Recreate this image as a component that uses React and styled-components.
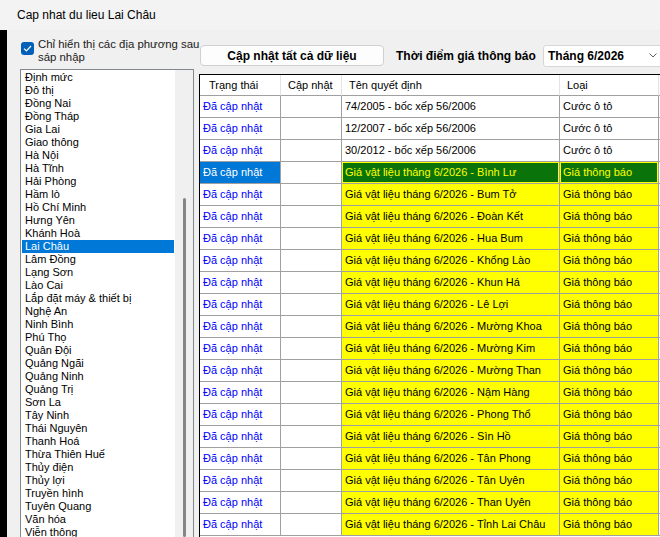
import React from "react";
import styled, { createGlobalStyle } from "styled-components";

const GlobalStyle = createGlobalStyle`
  html, body {
    margin: 0;
    padding: 0;
  }
  body {
    width: 660px;
    height: 537px;
    overflow: hidden;
    background: #f0f0f0;
    font-family: "Liberation Sans", Arial, sans-serif;
    color: #000;
  }
  * {
    box-sizing: border-box;
  }
`;

const areas = [
  "Định mức", "Đô thị", "Đồng Nai", "Đồng Tháp", "Gia Lai", "Giao thông",
  "Hà Nội", "Hà Tĩnh", "Hải Phòng", "Hầm lò", "Hồ Chí Minh", "Hưng Yên",
  "Khánh Hoà", "Lai Châu", "Lâm Đồng", "Lạng Sơn", "Lào Cai",
  "Lắp đặt máy & thiết bị", "Nghệ An", "Ninh Bình", "Phú Thọ", "Quân Đội",
  "Quảng Ngãi", "Quảng Ninh", "Quảng Trị", "Sơn La", "Tây Ninh",
  "Thái Nguyên", "Thanh Hoá", "Thừa Thiên Huế", "Thủy điện", "Thủy lợi",
  "Truyền hình", "Tuyên Quang", "Văn hóa", "Viễn thông",
];

const communes = [
  "Bình Lư", "Bum Tở", "Đoàn Kết", "Hua Bum", "Khổng Lào", "Khun Há",
  "Lê Lợi", "Mường Khoa", "Mường Kim", "Mường Than", "Nậm Hàng",
  "Phong Thổ", "Sìn Hồ", "Tân Phong", "Tân Uyên", "Than Uyên",
  "Tỉnh Lai Châu",
];

const rows = [
  { name: "74/2005 - bốc xếp 56/2006", kind: "Cước ô tô", price: false },
  { name: "12/2007 - bốc xếp 56/2006", kind: "Cước ô tô", price: false },
  { name: "30/2012 - bốc xếp 56/2006", kind: "Cước ô tô", price: false },
  ...communes.map((c) => ({
    name: `Giá vật liệu tháng 6/2026 - ${c}`,
    kind: "Giá thông báo",
    price: true,
  })),
];

const cols = [81, 61, 218, 99, 140];
const headers = ["Trạng thái", "Cập nhật", "Tên quyết định", "Loại", ""];
const SELECTED_ROW = 3;

export default function App() {
  return (
    <>
      <GlobalStyle />
      <Window>
        <TitleBar>Cap nhat du lieu Lai Châu</TitleBar>
        <Body>
          <Edge />
          <Side>
            <CheckRow>
              <CheckBox>
                <svg width="9" height="7" viewBox="0 0 9 7">
                  <path
                    d="M1 3.6 L3.4 6 L8 1"
                    fill="none"
                    stroke="#fff"
                    strokeWidth="1.2"
                  />
                </svg>
              </CheckBox>
              <CheckLabel>Chỉ hiển thị các địa phương sau sáp nhập</CheckLabel>
            </CheckRow>
            <ListBox>
              <Items>
                {areas.map((a) => (
                  <Item key={a} $selected={a === "Lai Châu"}>
                    {a}
                  </Item>
                ))}
              </Items>
              <Track>
                <Thumb />
              </Track>
            </ListBox>
          </Side>
          <Main>
            <Toolbar>
              <Button>Cập nhật tất cả dữ liệu</Button>
              <BoldLabel>Thời điểm giá thông báo</BoldLabel>
              <Select>
                <span>Tháng 6/2026</span>
                <svg width="8" height="5" viewBox="0 0 8 5">
                  <path d="M0.5 0.5 L4 4 L7.5 0.5" fill="none" stroke="#606060" />
                </svg>
              </Select>
            </Toolbar>
            <Grid>
              <HeadRow>
                {headers.map((h, i) => (
                  <HeadCell key={i} $w={cols[i]} $first={i === 0}>
                    {h}
                  </HeadCell>
                ))}
              </HeadRow>
              {rows.map((r, i) => {
                const sel = i === SELECTED_ROW;
                const tone = r.price ? (sel ? "green" : "yellow") : "plain";
                return (
                  <Row key={i}>
                    <Cell $w={cols[0]} $tone={sel ? "selected" : "link"}>
                      Đã cập nhật
                    </Cell>
                    <Cell $w={cols[1]} />
                    <Cell $w={cols[2]} $tone={tone}>
                      {r.name}
                    </Cell>
                    <Cell $w={cols[3]} $tone={tone}>
                      {r.kind}
                    </Cell>
                    <Cell $w={cols[4]} />
                  </Row>
                );
              })}
            </Grid>
          </Main>
        </Body>
      </Window>
    </>
  );
}

const Window = styled.div`
  width: 660px;
  height: 537px;
  display: flex;
  flex-direction: column;
  overflow: hidden;
`;

const TitleBar = styled.div`
  height: 30px;
  flex: none;
  display: flex;
  align-items: center;
  padding-left: 17px;
  background: #f3f3f3;
  font-size: 12px;
`;

const Body = styled.div`
  flex: 1;
  min-height: 0;
  display: flex;
  background: #f0f0f0;
`;

const Edge = styled.div`
  width: 7px;
  flex: none;
  background: #000;
`;

const Side = styled.div`
  width: 192px;
  flex: none;
  display: flex;
  flex-direction: column;
  padding: 8px 5px 0 13px;
`;

const CheckRow = styled.div`
  display: flex;
  gap: 4px;
  height: 26px;
  margin: 0 -8px 5px 0;
`;

const CheckBox = styled.span`
  width: 13px;
  height: 13px;
  flex: none;
  margin: 4px 0 0 1px;
  border-radius: 3px;
  background: #005fb8;
  display: flex;
  align-items: center;
  justify-content: center;
`;

const CheckLabel = styled.span`
  font-size: 11.4px;
  line-height: 13px;
  color: #1a1a1a;
`;

const ListBox = styled.div`
  flex: 1;
  min-height: 0;
  display: flex;
  border: 1px solid #828790;
  border-bottom: none;
  background: #fff;
  overflow: hidden;
`;

const Items = styled.div`
  flex: 1;
  padding: 1px;
  min-width: 0;
`;

const Item = styled.div`
  height: 13px;
  line-height: 13px;
  padding-left: 3px;
  font-size: 11px;
  white-space: nowrap;
  background: ${(p) => (p.$selected ? "#0078d7" : "transparent")};
  color: ${(p) => (p.$selected ? "#fff" : "#000")};
`;

const Track = styled.div`
  width: 18px;
  flex: none;
  display: flex;
  flex-direction: column;
  align-items: center;
  padding-top: 128px;
  background: #f0f0f0;
`;

const Thumb = styled.div`
  width: 3px;
  flex: 1;
  border-radius: 2px;
  background: #858585;
`;

const Main = styled.div`
  flex: 1;
  min-width: 0;
  display: flex;
  flex-direction: column;
  padding-top: 15px;
`;

const Toolbar = styled.div`
  display: flex;
  align-items: center;
  gap: 12px;
  height: 21px;
  padding-left: 1px;
`;

const Button = styled.div`
  width: 184px;
  height: 21px;
  flex: none;
  display: flex;
  align-items: center;
  justify-content: center;
  border: 1px solid #d0d0d0;
  border-radius: 4px;
  background: #fdfdfd;
  font-size: 12px;
  font-weight: 700;
`;

const BoldLabel = styled.span`
  width: 135px;
  font-size: 12px;
  font-weight: 700;
  white-space: nowrap;
  flex: none;
`;

const Select = styled.div`
  width: 130px;
  height: 22px;
  flex: none;
  display: flex;
  align-items: center;
  justify-content: space-between;
  padding: 0 15px 0 4px;
  border: 1px solid #d6d6d6;
  border-radius: 3px;
  background: #fff;
  font-size: 12px;
  font-weight: 700;
`;

const Grid = styled.div`
  flex: 1;
  min-height: 0;
  margin-top: 8px;
  border-top: 1px solid #000;
  border-left: 1px solid #000;
  background: #fff;
  overflow: hidden;
`;

const HeadRow = styled.div`
  display: flex;
  height: 21px;
`;

const HeadCell = styled.div`
  width: ${(p) => p.$w}px;
  flex: none;
  line-height: 20px;
  padding-left: ${(p) => (p.$first ? 9 : 7)}px;
  border-right: 1px solid #e3e3e3;
  border-bottom: 1px solid #a0a0a0;
  font-size: 11px;
  white-space: nowrap;
`;

const Row = styled.div`
  display: flex;
  height: 22px;
`;

const tones = {
  plain: { bg: "#fff", fg: "#000" },
  link: { bg: "#fff", fg: "#0000ff" },
  selected: { bg: "#0078d7", fg: "#fff" },
  yellow: { bg: "#ffff00", fg: "#000" },
  green: { bg: "#0a730a", fg: "#ffff00" },
};

const Cell = styled.div`
  width: ${(p) => p.$w}px;
  flex: none;
  line-height: 21px;
  padding-left: 3px;
  border-right: 1px solid #a0a0a0;
  border-bottom: 1px solid #a0a0a0;
  font-size: 11px;
  white-space: nowrap;
  overflow: hidden;
  background: ${(p) => tones[p.$tone || "plain"].bg};
  color: ${(p) => tones[p.$tone || "plain"].fg};
  box-shadow: ${(p) => (p.$tone === "green" ? "inset 0 0 0 1px #ffff00" : "none")};
`;
